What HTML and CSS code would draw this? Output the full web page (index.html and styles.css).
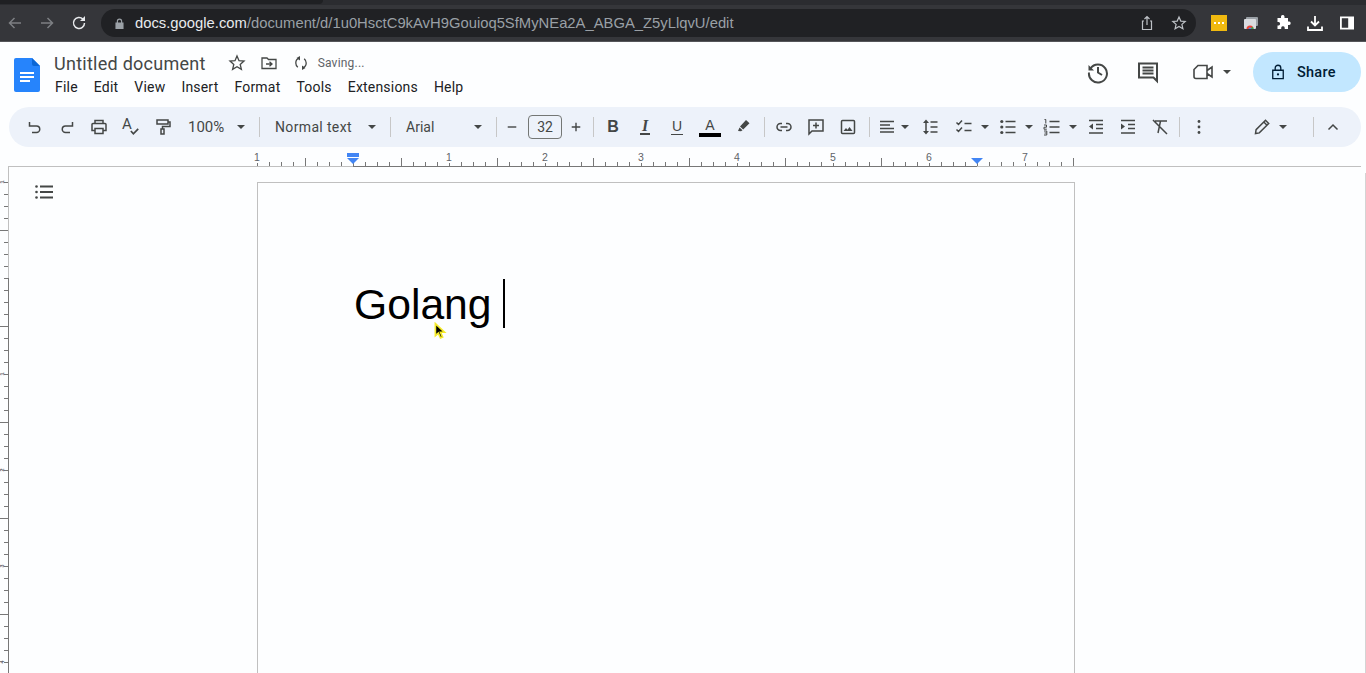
FILE: index.html
```html
<!DOCTYPE html>
<html lang="en">
<head>
    <meta charset="UTF-8">
    <title>Untitled document - Google Docs</title>
    <link rel="stylesheet" href="styles.css">
</head>
<body>

    <!-- browser bar -->
    <div class="tabstrip"><div class="tab"></div></div>
    <div class="browserbar">
        <svg class="nav nav-off" viewBox="0 0 16 16"><path d="M14 8H3M7.500 3L2.500 8l5 5"/></svg>
        <svg class="nav nav-off" viewBox="0 0 16 16"><path d="M2 8h11M8.500 3l5 5-5 5"/></svg>
        <svg class="nav" viewBox="0 0 16 16"><path d="M13.500 8a5.500 5.500 0 1 1-1.600-3.900"/><path class="solid" d="M14 1v5H9z"/></svg>
        <div class="omnibox">
            <svg class="lock" viewBox="0 0 10 12"><path d="M2 5V3.500a3 3 0 0 1 6 0V5h1.500v7H.5V5zM3.300 5h3.400V3.500a1.700 1.700 0 0 0-3.400 0z"/></svg>
            <div class="url"><span class="host">docs.google.com</span>/document/d/1u0HsctC9kAvH9Gouioq5SfMyNEa2A_ABGA_Z5yLlqvU/edit</div>
            <svg class="omni-icon" viewBox="0 0 16 16"><path d="M5 6H3.500v8.500h9V6H11M8 10V1.500M5.500 4L8 1.500 10.500 4"/></svg>
            <svg class="omni-icon omni-last" viewBox="0 0 16 16"><path d="M8 2l1.800 4.100 4.400.4-3.300 2.900 1 4.300L8 11.400l-3.900 2.300 1-4.300-3.300-2.900 4.400-.4z"/></svg>
        </div>
        <div class="ext-yellow"><span></span><span></span><span></span></div>
        <svg class="ext" viewBox="0 0 16 16"><rect x="3" y="2" width="12" height="9" rx="1" fill="#9aa0a6"/><rect x="1" y="4" width="12" height="10" rx="1" fill="#dadce0"/><path d="M3.500 14a3.500 3.500 0 0 1 7 0z" fill="#ea4335"/><path d="M5.500 14a1.500 1.500 0 0 1 3 0z" fill="#4285f4"/><path d="M8.500 14h2a3 3 0 0 0-.8-2.200L8 13z" fill="#34a853"/></svg>
        <svg class="ext" viewBox="0 0 16 16"><path class="fill-white" d="M6 1.500a1.800 1.800 0 0 1 3.500 0V3H13v3.400h1.300a1.800 1.800 0 0 1 0 3.500H13V14H9.700v-1.300a1.800 1.800 0 0 0-3.500 0V14H2.500v-3.500h1.200a1.800 1.800 0 0 0 0-3.500H2.500V3H6z"/></svg>
        <svg class="ext" viewBox="0 0 16 16"><path class="line-white" d="M8 1v9M4 6.500L8 10.500l4-4M1 11.500V15h14v-3.500"/></svg>
        <svg class="ext" viewBox="0 0 16 16"><path class="fill-white" fill-rule="evenodd" d="M1 1.500h14v13H1zM2.800 3.300v9.400h6.400V3.300z"/></svg>
    </div>

    <!-- docs header -->
    <header class="docs-header">
        <svg class="docs-logo" viewBox="0 0 26 34">
            <path fill="#2684fc" d="M2 0h16l8 8v24a2 2 0 0 1-2 2H2a2 2 0 0 1-2-2V2a2 2 0 0 1 2-2z"/>
            <path fill="#0c67d6" d="M18 0l8 8h-6a2 2 0 0 1-2-2z"/>
            <path fill="#fff" d="M6 14h14v2H6zM6 18h14v2H6zM6 22h10v2H6z"/>
        </svg>
        <div class="title-block">
            <div class="title-row">
                <span class="doc-title">Untitled document</span>
                <svg class="title-icon star" viewBox="0 0 18 18"><path d="M9 2l2 4.700 5 .4-3.800 3.300 1.200 5L9 12.800l-4.400 2.600 1.200-5L2 7.100l5-.4z"/></svg>
                <svg class="title-icon folder" viewBox="0 0 18 18"><path d="M2 4h5l1.500 1.500H16v9H2zM6 10h6M9.500 7.800L12 10l-2.500 2.200"/></svg>
                <svg class="title-icon sync" viewBox="0 0 18 18"><path d="M7 4.200C5 5 3.800 6.800 3.800 9c0 1.800.8 3.200 2 4.200M11 13.800c2-.8 3.200-2.600 3.200-4.800 0-1.800-.8-3.200-2-4.200"/><path class="solid" d="M8 2v4.500L4.500 4zM10 16v-4.500l3.500 2.500z"/></svg>
                <span class="saving">Saving...</span>
            </div>
            <nav class="menu">
                <span>File</span><span>Edit</span><span>View</span><span>Insert</span><span>Format</span><span>Tools</span><span>Extensions</span><span>Help</span>
            </nav>
        </div>
        <div class="header-right">
            <svg class="head-icon" viewBox="0 0 24 24"><path d="M4.500 8.500A9 9 0 1 1 3 12.500"/><path d="M12 7v5.500l4 2.500"/><path class="solid" d="M2.500 5v5.500H8z"/></svg>
            <svg class="head-icon comment" viewBox="0 0 24 24"><path d="M3 3.500h18V21l-3.500-3.500H3zM6.500 7.500h11M6.500 10.500h11M6.500 13.500h11"/></svg>
            <svg class="head-icon meet" viewBox="0 0 24 24"><path d="M7 5.500h9v13H5a2 2 0 0 1-2-2V9.500zM16 10.500l5-3.500v10l-5-3.500"/></svg>
            <span class="arrow arrow-meet"></span>
            <button class="share">
                <svg viewBox="0 0 16 18"><path d="M2 7h12v9.500H2zM4.800 7V4.500a3.200 3.200 0 0 1 6.400 0V7"/><circle class="solid" cx="8" cy="11.800" r="1.300"/></svg>
                Share
            </button>
        </div>
    </header>

    <!-- toolbar -->
    <div class="toolbar">
        <div class="btn"><svg viewBox="0 0 18 18"><path d="M3.500 4v4h4M3.800 8h6.700a3 3 0 0 1 0 6.500H6"/></svg></div>
        <div class="btn"><svg viewBox="0 0 18 18"><path d="M14.500 4v4h-4M14.200 8H7.500a3 3 0 0 0 0 6.500H12"/></svg></div>
        <div class="btn"><svg viewBox="0 0 18 18"><path d="M5 6V2.500h8V6M5 12.500H2V6.500a1 1 0 0 1 1-1h12a1 1 0 0 1 1 1v6h-3M5 10.500h8v5H5z"/></svg></div>
        <div class="btn btn-text"><span class="spell">A</span><svg class="check" viewBox="0 0 8 6"><path d="M.8 2.500L3 5 7.300.6"/></svg></div>
        <div class="btn"><svg viewBox="0 0 18 18"><path d="M3 2h11v4H3zM14 4h2v4.500H8.500V11M7 11h3v5H7z"/></svg></div>
        <div class="sel sel-zoom"><span>100%</span><i class="arrow"></i></div>
        <div class="sep"></div>
        <div class="sel sel-style"><span>Normal text</span><i class="arrow"></i></div>
        <div class="sep"></div>
        <div class="sel sel-font"><span>Arial</span><i class="arrow"></i></div>
        <div class="sep"></div>
        <div class="btn btn-small"><svg viewBox="0 0 18 18"><path d="M3.500 9h11"/></svg></div>
        <div class="size-box">32</div>
        <div class="btn btn-small btn-plus"><svg viewBox="0 0 18 18"><path d="M3.500 9h11M9 3.500v11"/></svg></div>
        <div class="sep sep-plus"></div>
        <div class="btn"><span class="fmt fmt-b">B</span></div>
        <div class="btn"><span class="fmt fmt-i">I</span></div>
        <div class="btn"><span class="fmt fmt-u">U</span></div>
        <div class="btn btn-color"><span class="fmt-a">A</span><span class="color-bar"></span></div>
        <div class="btn btn-color"><svg viewBox="0 0 18 18"><path class="solid" d="M5 8.500l6-6.500 3.500 3.200-6.300 6.300zM3 13l1.500-3.500 3 2.800-1.500 1z"/></svg></div>
        <div class="sep sep-high"></div>
        <div class="btn"><svg viewBox="0 0 18 18"><path d="M7 5.500H5.500a3.500 3.500 0 0 0 0 7H7M11 5.500h1.500a3.500 3.500 0 0 1 0 7H11M5.500 9h7"/></svg></div>
        <div class="btn"><svg viewBox="0 0 18 18"><path d="M2 2h14v11H5l-3 3zM9 4.500v6M6 7.500h6"/></svg></div>
        <div class="btn"><svg viewBox="0 0 18 18"><rect x="2.500" y="2.500" width="13" height="13" rx="1"/><path class="solid" d="M4.500 13l2.500-3 1.500 1.800 2-2.800 3 4z"/></svg></div>
        <div class="sep sep-image"></div>
        <div class="split split-align"><svg viewBox="0 0 18 18"><path d="M2 3.500h14M2 7h10M2 10.500h14M2 14h14"/></svg><i class="arrow"></i></div>
        <div class="btn"><svg viewBox="0 0 18 18"><path d="M9.500 4h7M9.500 9h7M9.500 14h7M5 3.500v11"/><path class="solid" d="M5 1.500L8 5H2zM5 16.500L8 13H2z"/></svg></div>
        <div class="split"><svg viewBox="0 0 18 18"><path d="M1.500 4.500L3.500 6.500 7 2.500M1.500 11.500l2 2L7 9.500M9.500 5.500h7M9.500 12.500h7"/></svg><i class="arrow"></i></div>
        <div class="split"><svg viewBox="0 0 18 18"><path d="M6.500 3.500h10M6.500 9h10M6.500 14.500h10"/><circle class="solid" cx="2.800" cy="3.500" r="1.600"/><circle class="solid" cx="2.800" cy="9" r="1.600"/><circle class="solid" cx="2.800" cy="14.500" r="1.600"/></svg><i class="arrow"></i></div>
        <div class="split"><svg viewBox="0 0 18 18"><path d="M6.500 3.500h10M6.500 9h10M6.500 14.500h10"/><path class="thin" d="M1.500 1.500h1.300v4M1 7h2.500v2.200H1v2h2.800M1 13h2.800v4H1M1.500 15h2"/></svg><i class="arrow"></i></div>
        <div class="btn btn-indent"><svg viewBox="0 0 18 18"><path d="M2 2.500h14M9 6.500h7M9 10.500h7M2 15h14"/><path class="solid" d="M6 5.500v6L2 8.500z"/></svg></div>
        <div class="btn"><svg viewBox="0 0 18 18"><path d="M2 2.500h14M9 6.500h7M9 10.500h7M2 15h14"/><path class="solid" d="M2 5.500v6l4-3z"/></svg></div>
        <div class="btn"><svg viewBox="0 0 18 18"><path d="M4 3h12M9.500 3L7 15M2 2l14 14"/></svg></div>
        <div class="sep sep-clear"></div>
        <div class="btn"><svg viewBox="0 0 18 18"><circle class="solid" cx="9" cy="3.500" r="1.400"/><circle class="solid" cx="9" cy="9" r="1.400"/><circle class="solid" cx="9" cy="14.500" r="1.400"/></svg></div>
        <div class="split split-mode"><svg viewBox="0 0 18 18"><path d="M2.500 15.500l.6-3.800L12.500 2.300l3.200 3.200-9.400 9.400zM10.800 4l3.200 3.200"/></svg><i class="arrow"></i></div>
        <div class="sep sep-mode"></div>
        <div class="btn"><svg viewBox="0 0 18 18"><path d="M4.500 11.500L9 7l4.500 4.500"/></svg></div>
    </div>

    <!-- horizontal ruler -->
    <div class="ruler">
        <div class="ruler-ticks"></div>
        <div class="ruler-margin"></div>
        <span class="ruler-num n0">1</span>
        <span class="ruler-num n1">1</span>
        <span class="ruler-num n2">2</span>
        <span class="ruler-num n3">3</span>
        <span class="ruler-num n4">4</span>
        <span class="ruler-num n5">5</span>
        <span class="ruler-num n6">6</span>
        <span class="ruler-num n7">7</span>
        <div class="indent-bar"></div>
        <div class="indent-down indent-left"></div>
        <div class="indent-down indent-right"></div>
    </div>

    <!-- document area -->
    <div class="workspace">
        <div class="side-ruler">
            <div class="side-margin"></div>
            <span class="side-num s0">1</span>
            <span class="side-num s1">1</span>
            <span class="side-num s2">2</span>
            <span class="side-num s3">3</span>
            <span class="side-num s4">4</span>
        </div>
        <div class="canvas">
            <svg class="outline-icon" viewBox="0 0 18 14"><circle cx="1.500" cy="1.500" r="1.300"/><circle cx="1.500" cy="7" r="1.300"/><circle cx="1.500" cy="12.500" r="1.300"/><path d="M5 .5h13v2H5zM5 6h13v2H5zM5 11.500h13v2H5z"/></svg>
            <div class="page">
                <span class="doc-text">Golang </span><span class="caret"></span>
                <svg class="pointer" viewBox="0 0 14 20"><path fill="#000" stroke="#f4ea2a" stroke-width="1.800" d="M1.500 1.500v13l3.200-2.800 2.300 5.300 2.300-1-2.300-5.200h4.300z"/></svg>
            </div>
        </div>
        <div class="right-edge"></div>
    </div>

</body>
</html>
```

FILE: styles.css
```css
* {
    box-sizing: border-box;
}

html, body {
    height: 673px;
    overflow: hidden;
}

body {
    margin: 0;
    background-color: #fdfeff;
    font-family: Roboto, Arial, sans-serif;
    color: #444746;
}

svg {
    display: block;
    fill: none;
    stroke: #444746;
    stroke-width: 1.5;
}

svg .solid {
    fill: #444746;
    stroke: none;
}

/* browser bar */
.tabstrip {
    height: 5px;
    background-color: #2b2c30;
}

.tab {
    width: 323px;
    height: 4px;
    background-color: #1f2023;
    border-bottom-right-radius: 4px;
}

.browserbar {
    height: 37px;
    background-color: #35363a;
    display: flex;
    align-items: center;
    padding-left: 7px;
    border-bottom: 1px solid #55565a;
}

.nav {
    width: 16px;
    height: 16px;
    margin-right: 16px;
    stroke: #e8eaed;
    flex: none;
}

.nav .solid {
    fill: #e8eaed;
}

.nav-off {
    stroke: #7d7f83;
}

.omnibox {
    width: 1095px;
    height: 28px;
    margin-left: -2px;
    background-color: #202124;
    border-radius: 14px;
    display: flex;
    align-items: center;
    padding-left: 14px;
    flex: none;
}

.lock {
    width: 9px;
    height: 11px;
    fill: #9aa0a6;
    stroke: none;
    fill-rule: evenodd;
    flex: none;
}

.url {
    font-family: "Liberation Sans", Arial, sans-serif;
    font-size: 14.800px;
    color: #9aa0a6;
    margin-left: 11px;
    flex: 1;
    white-space: nowrap;
}

.host {
    color: #e8eaed;
}

.omni-icon {
    width: 16px;
    height: 16px;
    stroke: #bdc1c6;
    stroke-width: 1.2;
    flex: none;
    margin-right: 16px;
}

.omni-last {
    margin-right: 9px;
}

.ext-yellow {
    width: 16px;
    height: 16px;
    margin-left: 15px;
    background-color: #f0b90f;
    display: flex;
    align-items: center;
    justify-content: center;
    gap: 2px;
    flex: none;
}

.ext-yellow span {
    width: 2px;
    height: 2px;
    background-color: #fff;
}

.ext {
    width: 16px;
    height: 16px;
    margin-left: 16px;
    stroke: none;
    flex: none;
}

.fill-white {
    fill: #fff;
    stroke: none;
}

.line-white {
    fill: none;
    stroke: #fff;
    stroke-width: 1.8;
}

/* docs header */
.docs-header {
    height: 65px;
    display: flex;
    padding-left: 14px;
}

.docs-logo {
    width: 26px;
    height: 34px;
    margin-top: 16px;
    stroke: none;
    flex: none;
}

.title-block {
    margin-left: 14px;
    padding-top: 9px;
}

.title-row {
    display: flex;
    align-items: center;
    height: 24px;
}

.doc-title {
    font-size: 18px;
    color: #444746;
    letter-spacing: .26px;
}

.title-icon {
    width: 18px;
    height: 18px;
    stroke-width: 1.3;
    flex: none;
}

.star {
    margin-left: 22px;
}

.folder {
    margin-left: 14px;
}

.sync {
    margin-left: 14px;
}

.saving {
    font-size: 12px;
    margin-left: 8px;
    color: #5f6368;
    letter-spacing: .2px;
}

.menu {
    display: flex;
    gap: 16px;
    font-size: 14px;
    letter-spacing: .2px;
    color: #202124;
    margin-top: 4px;
    padding-left: 1px;
}

.header-right {
    margin-left: auto;
    display: flex;
    align-items: center;
    height: 60px;
    padding-right: 5px;
}

.head-icon {
    width: 24px;
    height: 24px;
    stroke-width: 2;
    margin-right: 26px;
    flex: none;
    position: relative;
    left: -1px;
}

.comment {
    margin-right: 30px;
}

.meet {
    margin-right: 8px;
    stroke-width: 1.6;
    left: 0;
}

.arrow {
    display: block;
    width: 0;
    height: 0;
    border-left: 4.500px solid transparent;
    border-right: 4.500px solid transparent;
    border-top: 4.500px solid #444746;
    flex: none;
}

.arrow-meet {
    margin-right: 22px;
}

.share {
    width: 108px;
    height: 40px;
    padding: 0 0 0 18px;
    border: none;
    border-radius: 20px;
    background-color: #c2e7ff;
    color: #001d35;
    font-family: Roboto, Arial, sans-serif;
    font-size: 14.500px;
    font-weight: 500;
    letter-spacing: .25px;
    display: flex;
    align-items: center;
    gap: 12px;
}

.share svg {
    width: 14px;
    height: 16px;
    stroke: #001d35;
}

.share svg .solid {
    fill: #001d35;
}

/* toolbar */
.toolbar {
    height: 40px;
    margin: 0 5px 0 9px;
    padding: 0 12px 0 10px;
    background-color: #edf2fa;
    border-radius: 20px;
    display: flex;
    align-items: center;
}

.btn {
    width: 32px;
    height: 28px;
    display: flex;
    align-items: center;
    justify-content: center;
    position: relative;
    flex: none;
}

.btn svg, .split svg {
    width: 18px;
    height: 18px;
    flex: none;
}

.btn .thin, .split .thin {
    stroke-width: 1;
}

.btn-text .spell {
    font-size: 15px;
    color: #444746;
    margin: -6px 0 0 -8px;
}

.btn .check {
    position: absolute;
    width: 9px;
    height: 7px;
    left: 15px;
    top: 15px;
}

.sel {
    display: flex;
    align-items: center;
    justify-content: space-between;
    font-size: 14px;
    flex: none;
    color: #444746;
    padding: 0 9.500px 0 10px;
}

.sel-zoom {
    width: 75px;
    padding-left: 9px;
    font-size: 15px;
}

.sel-style {
    width: 120px;
    letter-spacing: .35px;
}

.sel-font {
    width: 95px;
}

.sep {
    width: 1px;
    height: 20px;
    background-color: #c7c7c7;
    margin: 0 5px;
    flex: none;
}

.btn-small {
    width: 20px;
}

.btn-small svg {
    width: 14px;
    height: 14px;
    stroke-width: 1.8;
}

.size-box {
    width: 34px;
    height: 24px;
    margin-left: 6px;
    border: 1px solid #747775;
    border-radius: 4px;
    font-size: 14px;
    text-align: center;
    line-height: 22px;
    flex: none;
}

.btn-plus {
    margin-left: 4px;
}

.sep-plus {
    margin: 0 3px 0 7px;
}

.fmt {
    font-family: "Liberation Sans", Arial, sans-serif;
    font-size: 16px;
    color: #444746;
}

.fmt-b {
    font-weight: bold;
}

.fmt-i {
    font-style: italic;
    font-weight: bold;
    font-family: "Liberation Serif", serif;
    border-bottom: 2px solid #444746;
    padding: 0 2px;
    line-height: 14px;
}

.fmt-u {
    font-size: 14px;
    border-bottom: 1.500px solid #444746;
    line-height: 15px;
    padding: 0 1px;
}

.btn-color {
    width: 34px;
    flex-direction: column;
}

.fmt-a {
    font-family: "Liberation Sans", Arial, sans-serif;
    font-size: 14px;
    line-height: 15px;
}

.color-bar {
    width: 22px;
    height: 4px;
    background-color: #000;
}

.sep-high {
    margin: 0 3px;
}

.sep-image {
    margin: 0 1px 0 5px;
}

.split {
    width: 44px;
    height: 28px;
    padding-left: 9px;
    display: flex;
    align-items: center;
    gap: 7.500px;
    flex: none;
}

.split-align {
    width: 43px;
    padding-left: 7px;
    gap: 4.500px;
}

.btn-indent {
    margin-left: 2px;
}

.sep-clear {
    margin: 0 3px;
}

.split-mode {
    margin-left: auto;
}

.sep-mode {
    margin: 0 3px 0 25px;
}

/* rulers */
.ruler {
    height: 20px;
    position: relative;
    margin: 0 5px 0 8px;
    border-bottom: 1px solid #c0c0c0;
}

.ruler-ticks {
    position: absolute;
    left: 249px;
    top: 11px;
    width: 817px;
    height: 8px;
    background-image:
        repeating-linear-gradient(90deg, #777 0 1px, transparent 1px 48px),
        repeating-linear-gradient(90deg, #777 0 1px, transparent 1px 12px);
    background-size: 100% 8px, 100% 4px;
    background-position: 0 0, 0 bottom;
    background-repeat: no-repeat;
}

.ruler-margin {
    position: absolute;
    left: 345px;
    width: 624px;
    bottom: -1px;
    height: 1px;
    background-color: #777;
}

.ruler-num {
    position: absolute;
    top: 4px;
    font-family: "Liberation Sans", Arial, sans-serif;
    font-size: 10.500px;
    line-height: 12px;
    color: #5f6368;
    width: 12px;
    text-align: center;
    background-color: #fdfeff;
}

.n0 { left: 243px; }
.n1 { left: 435px; }
.n2 { left: 531px; }
.n3 { left: 627px; }
.n4 { left: 723px; }
.n5 { left: 819px; }
.n6 { left: 915px; }
.n7 { left: 1011px; }

.indent-bar {
    position: absolute;
    left: 339px;
    top: 6px;
    width: 12px;
    height: 4px;
    background-color: #4285f4;
}

.indent-down {
    position: absolute;
    top: 11px;
    width: 0;
    height: 0;
    border-left: 6px solid transparent;
    border-right: 6px solid transparent;
    border-top: 6px solid #4285f4;
}

.indent-left {
    left: 339px;
}

.indent-right {
    left: 963px;
}

.workspace {
    display: flex;
    height: 506px;
}

.side-ruler {
    width: 8px;
    position: relative;
    flex: none;
    background-image:
        repeating-linear-gradient(180deg, #777 0 1px, transparent 1px 96px),
        repeating-linear-gradient(180deg, #777 0 1px, transparent 1px 12px);
    background-size: 8px 100%, 4px 100%;
    background-position: 0 63px, right 15px;
    background-repeat: no-repeat;
}

.side-margin {
    position: absolute;
    right: -1px;
    top: 111px;
    bottom: 0;
    width: 1px;
    background-color: #777;
    z-index: 1;
}

/* rotated labels, tiny so they stay inside the strip */
.side-num {
    position: absolute;
    left: -2px;
    width: 8px;
    height: 4px;
    text-align: center;
    font-family: "Liberation Sans", Arial, sans-serif;
    font-size: 5.500px;
    font-weight: bold;
    line-height: 4px;
    color: #5f6368;
    transform: rotate(-90deg);
}

.s0 { top: 13px; }
.s1 { top: 205px; }
.s2 { top: 301px; }
.s3 { top: 397px; }
.s4 { top: 493px; }

.canvas {
    flex: 1;
    position: relative;
    border-left: 1px solid #c0c0c0;
    padding: 15px 0 0 248px;
    overflow: hidden;
}

.outline-icon {
    position: absolute;
    left: 26px;
    top: 18px;
    width: 18px;
    height: 14px;
    fill: #444746;
    stroke: none;
}

.page {
    width: 818px;
    height: 491px;
    border: 1px solid #c0c0c0;
    border-bottom: none;
    position: relative;
    padding: 89px 0 0 96px;
    display: flex;
    align-items: flex-start;
}

.doc-text {
    font-family: "Liberation Sans", Arial, sans-serif;
    font-size: 42.670px;
    line-height: 64px;
    color: #000;
    white-space: pre;
}

.caret {
    width: 2px;
    height: 49px;
    margin: 7px 0 0 0;
    background-color: #000;
}

.pointer {
    position: absolute;
    left: 176px;
    top: 139px;
    width: 13px;
    height: 19px;
    stroke: none;
}

.right-edge {
    width: 1px;
    margin-top: 6px;
    background-color: #d4d4d4;
    flex: none;
}
```
